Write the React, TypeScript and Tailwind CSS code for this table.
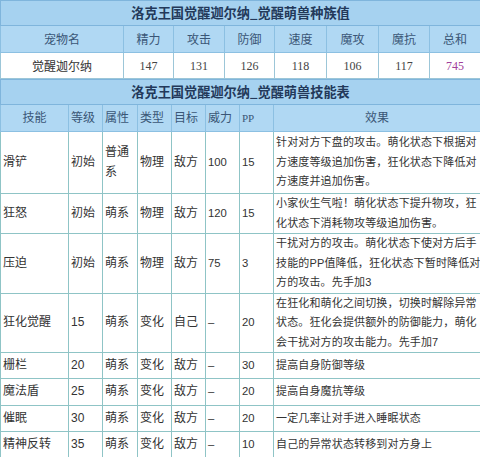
import React from 'react';

const statHeaders = ['宠物名', '精力', '攻击', '防御', '速度', '魔攻', '魔抗', '总和'];
const statValues = ['147', '131', '126', '118', '106', '117'];
const statCols = [123, 50, 51, 50, 52, 52, 51, 51];

interface Skill {
  name: string;
  level: string;
  attr: string[];
  kind: string;
  target: string;
  power: string;
  pp: string;
  effect: string[];
  h: string;
}

const skills: Skill[] = [
  {
    name: '滑铲', level: '初始', attr: ['普通', '系'], kind: '物理', target: '敌方', power: '100', pp: '15',
    effect: ['针对对方下盘的攻击。萌化状态下根据对', '方速度等级追加伤害，狂化状态下降低对', '方速度并追加伤害。'],
    h: 'h-[62px]',
  },
  {
    name: '狂怒', level: '初始', attr: ['萌系'], kind: '物理', target: '敌方', power: '120', pp: '15',
    effect: ['小家伙生气啦！萌化状态下提升物攻，狂', '化状态下消耗物攻等级追加伤害。'],
    h: 'h-[40px]',
  },
  {
    name: '压迫', level: '初始', attr: ['萌系'], kind: '物理', target: '敌方', power: '75', pp: '3',
    effect: ['干扰对方的攻击。萌化状态下使对方后手', '技能的PP值降低，狂化状态下暂时降低对', '方的攻击。先手加3'],
    h: 'h-[59px]',
  },
  {
    name: '狂化觉醒', level: '15', attr: ['萌系'], kind: '变化', target: '自己', power: '–', pp: '20',
    effect: ['在狂化和萌化之间切换，切换时解除异常', '状态。狂化会提供额外的防御能力，萌化', '会干扰对方的攻击能力。先手加7'],
    h: 'h-[59px]',
  },
  { name: '栅栏', level: '20', attr: ['萌系'], kind: '变化', target: '敌方', power: '–', pp: '30', effect: ['提高自身防御等级'], h: 'h-[26px]' },
  { name: '魔法盾', level: '25', attr: ['萌系'], kind: '变化', target: '敌方', power: '–', pp: '20', effect: ['提高自身魔抗等级'], h: 'h-[27px]' },
  { name: '催眠', level: '30', attr: ['萌系'], kind: '变化', target: '敌方', power: '–', pp: '20', effect: ['一定几率让对手进入睡眠状态'], h: 'h-[26px]' },
  { name: '精神反转', level: '35', attr: ['萌系'], kind: '变化', target: '敌方', power: '–', pp: '10', effect: ['自己的异常状态转移到对方身上'], h: 'h-[27px]' },
];

const skillCols = [68, 34, 35, 34, 34, 34, 34, 207];
const skillHeaders = ['技能', '等级', '属性', '类型', '目标', '威力', 'PP', '效果'];

const lines = (arr: string[]) =>
  arr.map((l, i) => (
    <React.Fragment key={i}>
      {i > 0 && <br />}
      {l}
    </React.Fragment>
  ));

export default function App() {
  return (
    <div className="w-[480px] h-[457px] bg-white overflow-hidden">
      {/* 种族值 */}
      <table className="table-fixed border-collapse w-[480px] font-['Liberation_Serif','Noto_Sans_CJK_SC',serif]">
        <colgroup>
          {statCols.map((w, i) => (
            <col key={i} style={{ width: w }} />
          ))}
        </colgroup>
        <tbody>
          <tr className="h-[25px] bg-[#a6d2f0]">
            <td colSpan={8} className="border border-[#7fb5dc] text-center text-[13.2px] font-bold text-[#23395a] font-['Noto_Sans_CJK_SC',sans-serif]">
              洛克王国觉醒迦尔纳_觉醒萌兽种族值
            </td>
          </tr>
          <tr className="h-[27px] bg-[#b0d8f3]">
            {statHeaders.map((t) => (
              <td key={t} className="border border-[#8cc0e2] text-center text-[12px] text-[#3a5676] font-['Noto_Sans_CJK_SC',sans-serif]">
                {t}
              </td>
            ))}
          </tr>
          <tr className="h-[26px] bg-white">
            <td className="border border-[#9cc6d8] text-center text-[12px] text-[#333] font-['Noto_Sans_CJK_SC',sans-serif]">觉醒迦尔纳</td>
            {statValues.map((v, i) => (
              <td key={i} className="border border-[#9cc6d8] text-center text-[12px] text-[#444]">
                {v}
              </td>
            ))}
            <td className="border border-[#9cc6d8] text-center text-[12px] text-[#a0409a]">745</td>
          </tr>
        </tbody>
      </table>

      {/* 技能表 */}
      <table className="table-fixed border-collapse w-[480px] font-['Liberation_Sans','Noto_Sans_CJK_SC',sans-serif] text-[11.3px] text-[#333]">
        <colgroup>
          {skillCols.map((w, i) => (
            <col key={i} style={{ width: w }} />
          ))}
        </colgroup>
        <tbody>
          <tr className="h-[25px] bg-[#a6d2f0]">
            <td colSpan={8} className="border border-[#7fb5dc] text-center text-[13.2px] font-bold text-[#23395a] font-['Noto_Sans_CJK_SC',sans-serif]">
              洛克王国觉醒迦尔纳_觉醒萌兽技能表
            </td>
          </tr>
          <tr className="h-[27px] bg-[#b0d8f3] text-[#3a5676] text-[12px]">
            {skillHeaders.map((t, i) => (
              <td
                key={t}
                className={`border border-[#8cc0e2] px-[2px] ${i === 0 || i === 7 ? 'text-center' : 'text-left'} ${t === 'PP' ? "font-['Liberation_Serif',serif] text-[11px]" : ''}`}
              >
                {t}
              </td>
            ))}
          </tr>
          {skills.map((s) => (
            <tr key={s.name} className={`${s.h} bg-white leading-[19.5px]`}>
              <td className="border border-[#8fc4c6] px-[2px] text-[12px]">{s.name}</td>
              <td className="border border-[#8fc4c6] px-[2px] text-[12px]">{s.level}</td>
              <td className="border border-[#8fc4c6] px-[2px] text-[12px]">{lines(s.attr)}</td>
              <td className="border border-[#8fc4c6] px-[2px] text-[12px]">{s.kind}</td>
              <td className="border border-[#8fc4c6] px-[2px] text-[12px]">{s.target}</td>
              <td className="border border-[#8fc4c6] px-[2px]">{s.power}</td>
              <td className="border border-[#8fc4c6] px-[2px]">{s.pp}</td>
              <td className="border border-[#8fc4c6] px-[2px] whitespace-nowrap text-[11px] tracking-[0.15px]">{lines(s.effect)}</td>
            </tr>
          ))}
        </tbody>
      </table>
    </div>
  );
}
